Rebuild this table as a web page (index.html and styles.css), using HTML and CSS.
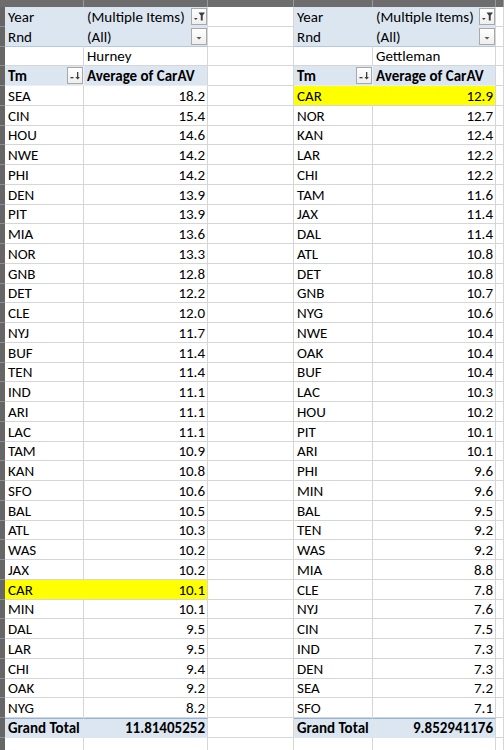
FILE: index.html
```html
<!DOCTYPE html>
<html>
<head>
<meta charset="utf-8">
<link rel="stylesheet" href="styles.css">
</head>
<body>
<div class="sheet">
  <div class="colhead">
    <i class="corner"></i><i class="ch"></i><i class="ch"></i><i class="ch"></i><i class="ch"></i><i class="ch"></i><i class="ch"></i>
  </div>

  <div class="row">
    <i class="rh"></i>
    <div class="c pv">Year</div>
    <div class="c pv pvb">(Multiple Items)<span class="btn"><svg viewBox="0 0 14 15" width="14" height="15"><path d="M6.5 3.5h6.5l-2.3 3v5h-1.9v-5z" fill="#3c3c3c"/><path d="M2 9h3.6l-1.8 2z" fill="#3c3c3c"/></svg></span></div>
    <div class="c"></div>
    <div class="c pv">Year</div>
    <div class="c pv pvb">(Multiple Items)<span class="btn"><svg viewBox="0 0 14 15" width="14" height="15"><path d="M6.5 3.5h6.5l-2.3 3v5h-1.9v-5z" fill="#3c3c3c"/><path d="M2 9h3.6l-1.8 2z" fill="#3c3c3c"/></svg></span></div>
    <div class="c"></div>
  </div>

  <div class="row">
    <i class="rh"></i>
    <div class="c pv last">Rnd</div>
    <div class="c pv pvb last">(All)<span class="btn"><svg viewBox="0 0 14 15" width="14" height="15"><path d="M4.5 8h5l-2.5 2.6z" fill="#5a5a5a"/></svg></span></div>
    <div class="c"></div>
    <div class="c pv last">Rnd</div>
    <div class="c pv pvb last">(All)<span class="btn"><svg viewBox="0 0 14 15" width="14" height="15"><path d="M4.5 8h5l-2.5 2.6z" fill="#5a5a5a"/></svg></span></div>
    <div class="c"></div>
  </div>

  <div class="row">
    <i class="rh"></i>
    <div class="c"></div><div class="c">Hurney</div><div class="c"></div>
    <div class="c"></div><div class="c">Gettleman</div><div class="c"></div>
  </div>

  <div class="row">
    <i class="rh"></i>
    <div class="c hd">Tm<span class="btn"><svg viewBox="0 0 14 15" width="14" height="15"><rect x="2.5" y="9" width="3" height="1.3" fill="#3c3c3c"/><rect x="9" y="4" width="1.3" height="6" fill="#3c3c3c"/><path d="M7.4 9h4.5l-2.25 2.6z" fill="#3c3c3c"/></svg></span></div>
    <div class="c hd hdb">Average of CarAV</div>
    <div class="c"></div>
    <div class="c hd">Tm<span class="btn"><svg viewBox="0 0 14 15" width="14" height="15"><rect x="2.5" y="9" width="3" height="1.3" fill="#3c3c3c"/><rect x="9" y="4" width="1.3" height="6" fill="#3c3c3c"/><path d="M7.4 9h4.5l-2.25 2.6z" fill="#3c3c3c"/></svg></span></div>
    <div class="c hd hdb">Average of CarAV</div>
    <div class="c"></div>
  </div>

  <div class="row"><i class="rh"></i><div class="c">SEA</div><div class="c n">18.2</div><div class="c"></div><div class="c hl">CAR</div><div class="c n hl hlb">12.9</div><div class="c"></div></div>
  <div class="row"><i class="rh"></i><div class="c">CIN</div><div class="c n">15.4</div><div class="c"></div><div class="c">NOR</div><div class="c n">12.7</div><div class="c"></div></div>
  <div class="row"><i class="rh"></i><div class="c">HOU</div><div class="c n">14.6</div><div class="c"></div><div class="c">KAN</div><div class="c n">12.4</div><div class="c"></div></div>
  <div class="row"><i class="rh"></i><div class="c">NWE</div><div class="c n">14.2</div><div class="c"></div><div class="c">LAR</div><div class="c n">12.2</div><div class="c"></div></div>
  <div class="row"><i class="rh"></i><div class="c">PHI</div><div class="c n">14.2</div><div class="c"></div><div class="c">CHI</div><div class="c n">12.2</div><div class="c"></div></div>
  <div class="row"><i class="rh"></i><div class="c">DEN</div><div class="c n">13.9</div><div class="c"></div><div class="c">TAM</div><div class="c n">11.6</div><div class="c"></div></div>
  <div class="row"><i class="rh"></i><div class="c">PIT</div><div class="c n">13.9</div><div class="c"></div><div class="c">JAX</div><div class="c n">11.4</div><div class="c"></div></div>
  <div class="row"><i class="rh"></i><div class="c">MIA</div><div class="c n">13.6</div><div class="c"></div><div class="c">DAL</div><div class="c n">11.4</div><div class="c"></div></div>
  <div class="row"><i class="rh"></i><div class="c">NOR</div><div class="c n">13.3</div><div class="c"></div><div class="c">ATL</div><div class="c n">10.8</div><div class="c"></div></div>
  <div class="row"><i class="rh"></i><div class="c">GNB</div><div class="c n">12.8</div><div class="c"></div><div class="c">DET</div><div class="c n">10.8</div><div class="c"></div></div>
  <div class="row"><i class="rh"></i><div class="c">DET</div><div class="c n">12.2</div><div class="c"></div><div class="c">GNB</div><div class="c n">10.7</div><div class="c"></div></div>
  <div class="row"><i class="rh"></i><div class="c">CLE</div><div class="c n">12.0</div><div class="c"></div><div class="c">NYG</div><div class="c n">10.6</div><div class="c"></div></div>
  <div class="row"><i class="rh"></i><div class="c">NYJ</div><div class="c n">11.7</div><div class="c"></div><div class="c">NWE</div><div class="c n">10.4</div><div class="c"></div></div>
  <div class="row"><i class="rh"></i><div class="c">BUF</div><div class="c n">11.4</div><div class="c"></div><div class="c">OAK</div><div class="c n">10.4</div><div class="c"></div></div>
  <div class="row"><i class="rh"></i><div class="c">TEN</div><div class="c n">11.4</div><div class="c"></div><div class="c">BUF</div><div class="c n">10.4</div><div class="c"></div></div>
  <div class="row"><i class="rh"></i><div class="c">IND</div><div class="c n">11.1</div><div class="c"></div><div class="c">LAC</div><div class="c n">10.3</div><div class="c"></div></div>
  <div class="row"><i class="rh"></i><div class="c">ARI</div><div class="c n">11.1</div><div class="c"></div><div class="c">HOU</div><div class="c n">10.2</div><div class="c"></div></div>
  <div class="row"><i class="rh"></i><div class="c">LAC</div><div class="c n">11.1</div><div class="c"></div><div class="c">PIT</div><div class="c n">10.1</div><div class="c"></div></div>
  <div class="row"><i class="rh"></i><div class="c">TAM</div><div class="c n">10.9</div><div class="c"></div><div class="c">ARI</div><div class="c n">10.1</div><div class="c"></div></div>
  <div class="row"><i class="rh"></i><div class="c">KAN</div><div class="c n">10.8</div><div class="c"></div><div class="c">PHI</div><div class="c n">9.6</div><div class="c"></div></div>
  <div class="row"><i class="rh"></i><div class="c">SFO</div><div class="c n">10.6</div><div class="c"></div><div class="c">MIN</div><div class="c n">9.6</div><div class="c"></div></div>
  <div class="row"><i class="rh"></i><div class="c">BAL</div><div class="c n">10.5</div><div class="c"></div><div class="c">BAL</div><div class="c n">9.5</div><div class="c"></div></div>
  <div class="row"><i class="rh"></i><div class="c">ATL</div><div class="c n">10.3</div><div class="c"></div><div class="c">TEN</div><div class="c n">9.2</div><div class="c"></div></div>
  <div class="row"><i class="rh"></i><div class="c">WAS</div><div class="c n">10.2</div><div class="c"></div><div class="c">WAS</div><div class="c n">9.2</div><div class="c"></div></div>
  <div class="row"><i class="rh"></i><div class="c">JAX</div><div class="c n">10.2</div><div class="c"></div><div class="c">MIA</div><div class="c n">8.8</div><div class="c"></div></div>
  <div class="row"><i class="rh"></i><div class="c hl">CAR</div><div class="c n hl hlb">10.1</div><div class="c"></div><div class="c">CLE</div><div class="c n">7.8</div><div class="c"></div></div>
  <div class="row"><i class="rh"></i><div class="c">MIN</div><div class="c n">10.1</div><div class="c"></div><div class="c">NYJ</div><div class="c n">7.6</div><div class="c"></div></div>
  <div class="row"><i class="rh"></i><div class="c">DAL</div><div class="c n">9.5</div><div class="c"></div><div class="c">CIN</div><div class="c n">7.5</div><div class="c"></div></div>
  <div class="row"><i class="rh"></i><div class="c">LAR</div><div class="c n">9.5</div><div class="c"></div><div class="c">IND</div><div class="c n">7.3</div><div class="c"></div></div>
  <div class="row"><i class="rh"></i><div class="c">CHI</div><div class="c n">9.4</div><div class="c"></div><div class="c">DEN</div><div class="c n">7.3</div><div class="c"></div></div>
  <div class="row"><i class="rh"></i><div class="c">OAK</div><div class="c n">9.2</div><div class="c"></div><div class="c">SEA</div><div class="c n">7.2</div><div class="c"></div></div>
  <div class="row"><i class="rh"></i><div class="c">NYG</div><div class="c n">8.2</div><div class="c"></div><div class="c">SFO</div><div class="c n">7.1</div><div class="c"></div></div>

  <div class="row">
    <i class="rh"></i>
    <div class="c gt">Grand Total</div><div class="c gt gtb n">11.81405252</div><div class="c"></div>
    <div class="c gt">Grand Total</div><div class="c gt gtb n">9.852941176</div><div class="c"></div>
  </div>

  <div class="row">
    <i class="rh"></i>
    <div class="c"></div><div class="c"></div><div class="c"></div><div class="c"></div><div class="c"></div><div class="c"></div>
  </div>
</div>
</body>
</html>
```

FILE: styles.css
```css
* { box-sizing: border-box; }

html, body {
  margin: 0;
  padding: 0;
  background: #fff;
  overflow: hidden;
}

body {
  font-family: Carlito, Calibri, Lato, "Open Sans", sans-serif;
  font-size: 15px;
  color: #000;
}

.sheet {
  width: 504px;
  height: 750px;
  overflow: hidden;
}

.colhead,
.row {
  display: grid;
  grid-template-columns: 5px 79px 124px 86px 79px 123px 1fr;
}

.colhead {
  height: 7px;
  background: #6d6d6d;
  overflow: hidden;
}

.colhead .ch {
  display: block;
  border-right: 1px solid #9a9a9a;
}

.row {
  height: 19.76px;
}

.rh {
  display: block;
  background: #666;
  border-bottom: 1px solid #8e8e8e;
}

.c {
  display: flex;
  align-items: flex-end;
  padding: 0 2px 0 3px;
  line-height: 17px;
  white-space: nowrap;
  overflow: hidden;
  border-right: 1px solid #d6d6d6;
  border-bottom: 1px solid #d6d6d6;
}

.n {
  justify-content: flex-end;
}

/* pivot filter area */
.pv {
  background: #dce6f1;
  border-bottom-color: #dce6f1;
  border-right-color: #dce6f1;
}

.pv.pvb {
  border-right-color: #d6d6d6;
  padding-right: 0;
}

.pv.last {
  border-bottom-color: #b6c8df;
}

.btn {
  margin-left: auto;
  align-self: center;
  width: 16px;
  height: 17px;
  border: 1px solid #a9a9a9;
  background: linear-gradient(#ffffff, #eeeeee);
  display: flex;
  align-items: center;
  justify-content: center;
  flex: none;
}

.btn svg {
  display: block;
}

/* header row */
.hd {
  background: #dce6f1;
  font-weight: bold;
  border-bottom-color: #e9eef5;
  border-right-color: #eef3f9;
  padding-right: 0;
}

.hd.hdb {
  border-right-color: #d6d6d6;
  padding-right: 2px;
}

/* highlighted */
.hl {
  background: #ffff00;
  border-right-color: #ffff00;
}

.hl.hlb {
  border-right-color: #d6d6d6;
}

/* grand total */
.gt {
  background: #dce6f1;
  font-weight: bold;
  border-top: 1px solid #95b3d7;
  border-right-color: #dce6f1;
  border-bottom-color: #dce6f1;
}

.gt.gtb {
  border-right-color: #d6d6d6;
}
```
